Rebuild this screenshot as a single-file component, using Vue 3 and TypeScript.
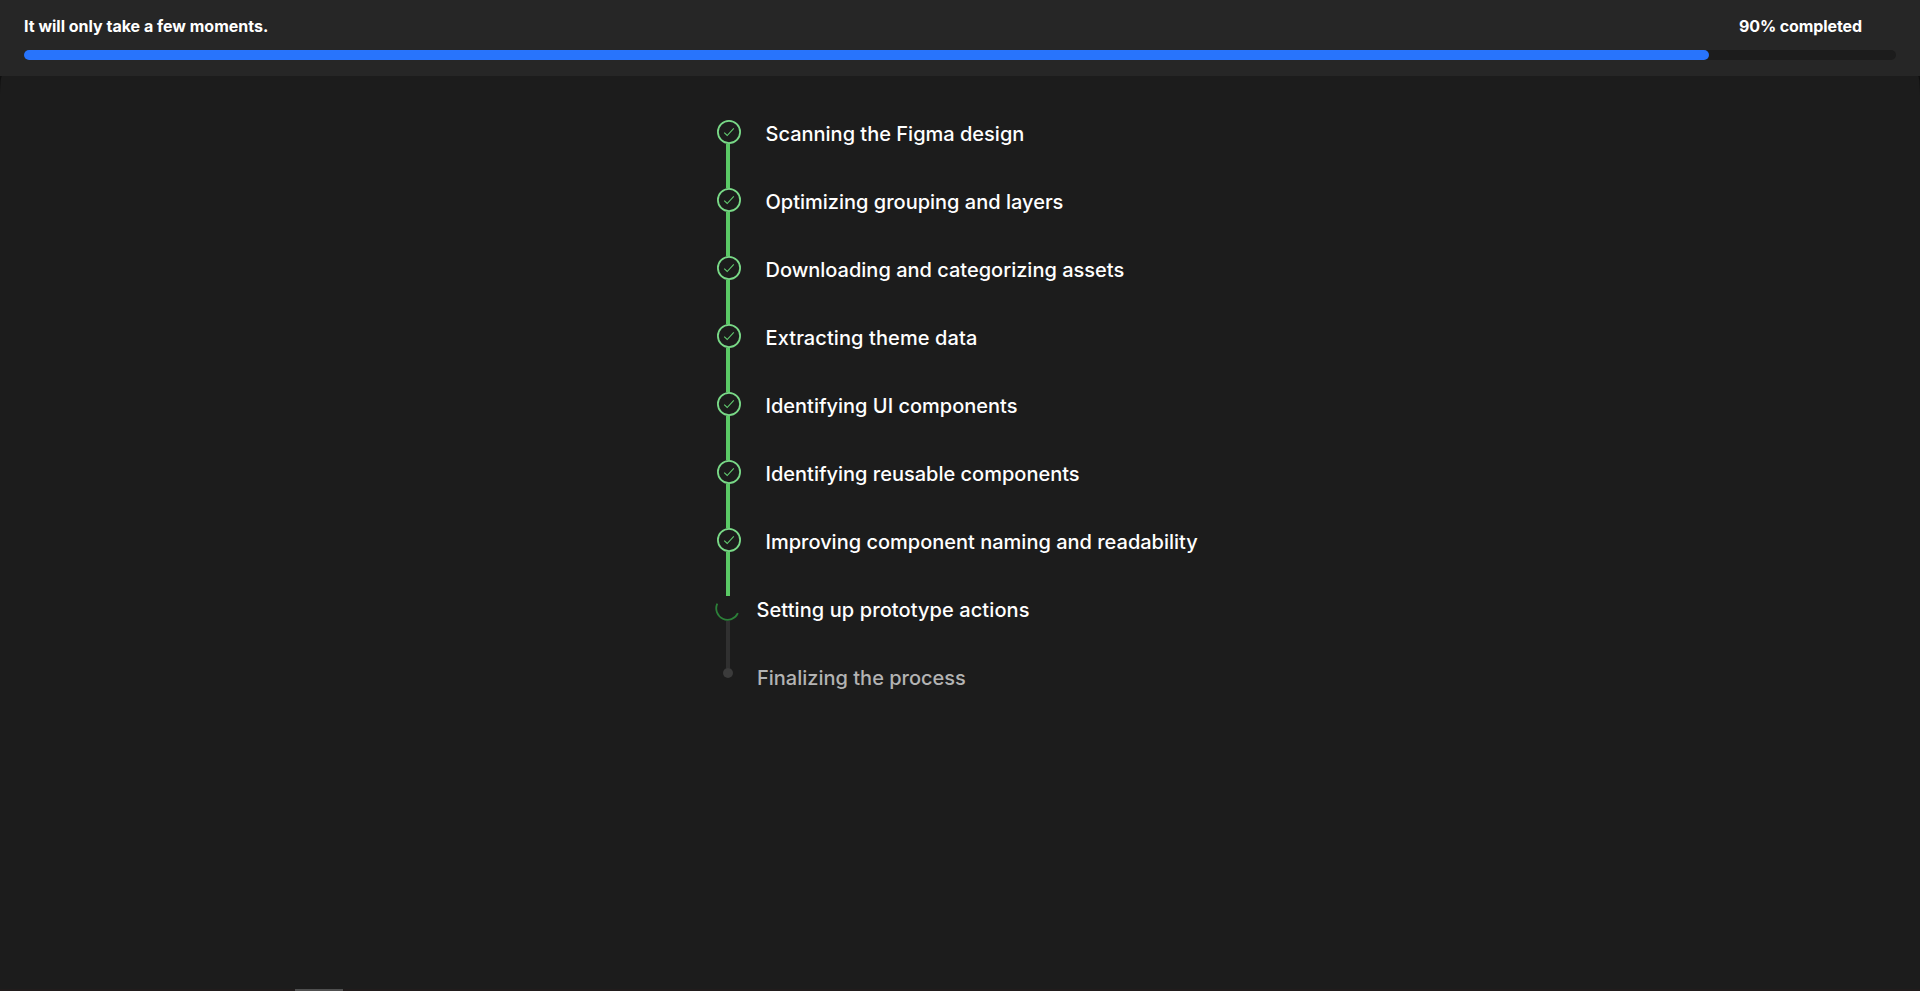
<script setup lang="ts">
type StepState = 'done' | 'active' | 'pending'

interface Step {
  label: string
  state: StepState
  wide?: boolean
}

const progress = 90

const steps: Step[] = [
  { label: 'Scanning the Figma design', state: 'done' },
  { label: 'Optimizing grouping and layers', state: 'done' },
  { label: 'Downloading and categorizing assets', state: 'done' },
  { label: 'Extracting theme data', state: 'done', wide: true },
  { label: 'Identifying UI components', state: 'done' },
  { label: 'Identifying reusable components', state: 'done' },
  { label: 'Improving component naming and readability', state: 'done' },
  { label: 'Setting up prototype actions', state: 'active', wide: true },
  { label: 'Finalizing the process', state: 'pending' },
]
</script>

<template>
  <div class="page">
    <header class="header">
      <div class="header-row">
        <span>It will only take a few moments.</span>
        <span class="percent">{{ progress }}% completed</span>
      </div>
      <div class="track">
        <div class="fill" :style="{ width: progress + '%' }"></div>
      </div>
    </header>

    <main class="content">
      <ol class="steps">
        <li v-for="step in steps" :key="step.label" class="step" :class="[step.state, { wide: step.wide }]">
          <div class="rail">
            <svg v-if="step.state === 'done'" class="icon" viewBox="0 0 24 24" fill="none">
              <circle cx="12" cy="12" r="11.1" stroke="#79d987" stroke-width="1.8" />
              <path d="M7.2 12.6 L10.2 15.5 L16.8 8.3" stroke="#62cb70" stroke-width="1.1" />
            </svg>
            <svg v-else-if="step.state === 'active'" class="icon" viewBox="0 0 24 24" fill="none">
              <path d="M2.3 6.6 A11.1 11.1 0 1 0 22.9 16.2" stroke="#2c8039" stroke-width="1.8" />
            </svg>
            <span v-else class="dot"></span>
            <span v-if="step.state !== 'pending'" class="line"></span>
          </div>
          <span class="label">{{ step.label }}</span>
        </li>
      </ol>
    </main>

    <footer class="footer"><span class="handle"></span></footer>
  </div>
</template>

<style>
body {
  background: #1c1c1c;
}
</style>

<style scoped>
.page {
  display: flex;
  flex-direction: column;
  height: 991px;
  overflow: hidden;
  background: #101010;
  color: #fff;
  font-family: Inter, sans-serif;
}
.header {
  box-sizing: border-box;
  height: 76px;
  padding: 16px 24px 0;
  background: #262626;
}
.header-row {
  display: flex;
  justify-content: space-between;
  height: 34px;
  padding-right: 34px;
  font-size: 16px;
  font-weight: 700;
  line-height: 20px;
}
.percent {
  letter-spacing: -0.1px;
}
.track {
  height: 10px;
  border-radius: 5px;
  background: #1c1c1c;
}
.fill {
  height: 100%;
  border-radius: 5px;
  background: #2874fc;
}
.content {
  flex: 1;
  padding-top: 44px;
  padding-left: 714px;
  border-radius: 2px 2px 0 0 / 20px 20px 0 0;
  background: #1c1c1c;
}
.steps {
  margin: 0;
  padding: 0;
  list-style: none;
}
.step {
  display: flex;
  height: 68px;
}
.rail {
  display: flex;
  flex-direction: column;
  align-items: center;
  width: 28px;
}
.icon {
  flex: none;
  width: 24px;
  height: 24px;
}
.line {
  flex: 1;
  width: 4px;
  background: #5ac965;
}
.label {
  padding-top: 2px;
  font-size: 20px;
  font-weight: 500;
  line-height: 24px;
}
.wide .label {
  letter-spacing: 0.09px;
}
.done .icon {
  margin-left: 2px;
}
.done .label {
  padding-left: 23.5px;
}
.active .icon {
  margin-top: 1px;
  margin-left: -2px;
}
.active .label {
  padding-left: 14.5px;
}
.pending .rail {
  padding-top: 4px;
}
.pending .label {
  padding-left: 15px;
  color: #b3b3b3;
}
.active .line {
  margin-bottom: -4px;
  background: #303030;
}
.dot {
  width: 10px;
  height: 10px;
  border-radius: 50%;
  background: #3b3b3b;
}
.footer {
  height: 2px;
  padding-left: 295px;
  background: #211c1c;
}
.handle {
  display: block;
  width: 48px;
  height: 2px;
  background: #505050;
}
</style>
